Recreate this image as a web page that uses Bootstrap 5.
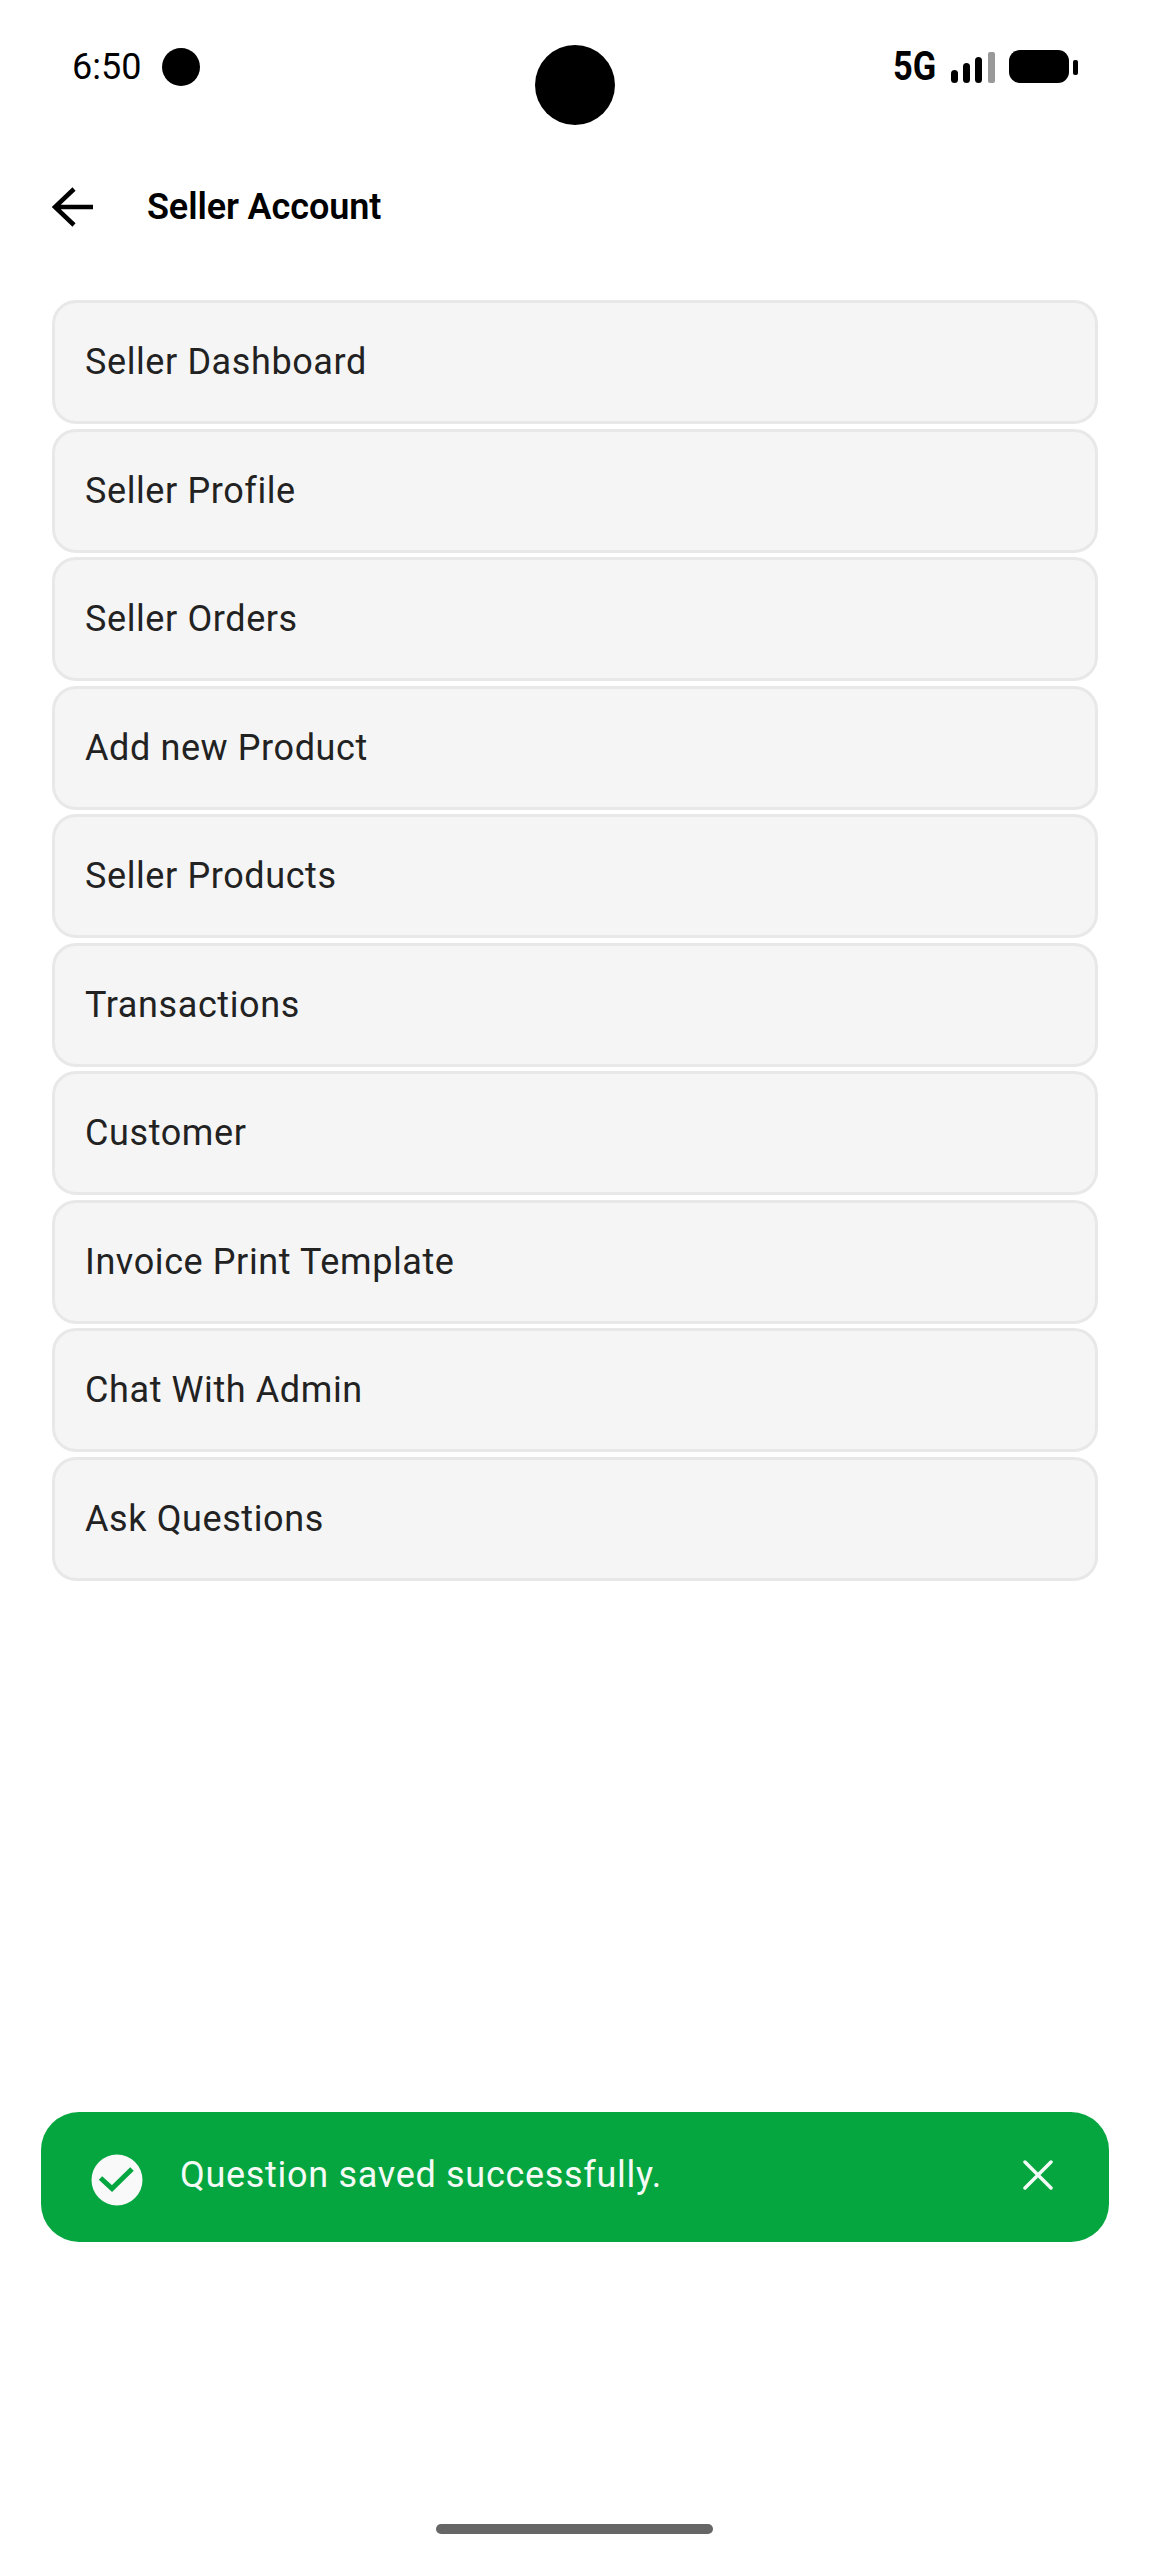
<!DOCTYPE html>
<html lang="en">

<head>
  <meta charset="utf-8">
  <meta name="viewport" content="width=device-width, initial-scale=1.0">
  <title>Seller Account</title>
  <link href="https://cdn.jsdelivr.net/npm/bootstrap@5.3.3/dist/css/bootstrap.min.css" rel="stylesheet">
  <style>
    body {
      background-color: #fff;
      font-family: Roboto, "Liberation Sans", sans-serif;
      color: #000;
    }

    .phone-screen {
      width: 1150px;
      height: 2560px;
      position: relative;
      overflow: hidden;
    }

    .status-row {
      height: 167px;
      padding: 48px 64px 0 72px;
    }

    .status-time {
      font-size: 36px;
      line-height: 38px;
    }

    .notif-dot {
      width: 38px;
      height: 38px;
      margin-left: 21px;
      border-radius: 50%;
      background-color: #000;
    }

    .camera-hole {
      position: absolute;
      left: 535px;
      top: 45px;
      width: 80px;
      height: 80px;
      border-radius: 50%;
      background-color: #000;
    }

    .net-label {
      font-size: 40px;
      line-height: 38px;
      font-weight: 700;
      width: 42px;
      display: inline-block;
      transform: scaleX(.86);
      transform-origin: left center;
      margin-right: 16px;
    }

    .title-row {
      height: 80px;
      padding-left: 52px;
    }

    .title-text {
      font-size: 36px;
      font-weight: 600;
      margin-left: 54px;
      letter-spacing: -.1px;
    }

    .menu-stack {
      margin: 53px 52px 0;
      gap: 4.5px;
    }

    .menu-entry {
      height: 124px;
      padding-left: 30px;
      background-color: #f5f5f5;
      border: 3px solid #e8e8e8;
      border-radius: 24px;
      font-size: 36px;
      letter-spacing: .6px;
      color: #222;
    }

    .saved-toast {
      position: absolute;
      left: 41px;
      top: 2112px;
      width: 1068px;
      height: 130px;
      margin: 0;
      padding: 0 56px 4px 50px;
      border: 0;
      border-radius: 38px;
      background-color: #05a640;
      color: #f4fbf6;
      font-size: 36px;
      letter-spacing: .7px;
    }

    .saved-toast svg.check-icon {
      margin-top: 10px;
      margin-right: 37px;
    }

    .toast-close {
      line-height: 0;
      border: 0;
    }

    .home-pill {
      position: absolute;
      left: 436px;
      top: 2524px;
      width: 277px;
      height: 10px;
      border-radius: 5px;
      background-color: #666;
    }
  </style>
</head>

<body>
  <div class="phone-screen">
    <div class="status-row d-flex justify-content-between align-items-start">
      <div class="d-flex align-items-center">
        <span class="status-time">6:50</span>
        <span class="notif-dot"></span>
      </div>
      <div class="d-flex align-items-center">
        <span class="net-label">5G</span>
        <svg width="135" height="38" viewBox="0 0 135 38">
          <rect x="0" y="22" width="7" height="13" rx="3.5" fill="#000" />
          <rect x="12" y="15" width="7" height="20" rx="3.5" fill="#000" />
          <rect x="24" y="9" width="7" height="26" rx="3.5" fill="#000" />
          <rect x="37" y="4" width="7" height="31" rx="2" fill="#999" />
          <rect x="58" y="2" width="60" height="33" rx="11" fill="#000" />
          <rect x="122" y="12" width="5" height="15" rx="2" fill="#000" />
        </svg>
      </div>
    </div>
    <div class="camera-hole"></div>

    <div class="title-row d-flex align-items-center">
      <svg width="41" height="40" viewBox="0 0 41 40">
        <path d="M41 20H3M22 2 3 20 22 38" fill="none" stroke="#000" stroke-width="4.500" />
      </svg>
      <span class="title-text">Seller Account</span>
    </div>

    <div class="menu-stack d-flex flex-column">
      <div class="menu-entry d-flex align-items-center">Seller Dashboard</div>
      <div class="menu-entry d-flex align-items-center">Seller Profile</div>
      <div class="menu-entry d-flex align-items-center">Seller Orders</div>
      <div class="menu-entry d-flex align-items-center">Add new Product</div>
      <div class="menu-entry d-flex align-items-center">Seller Products</div>
      <div class="menu-entry d-flex align-items-center">Transactions</div>
      <div class="menu-entry d-flex align-items-center">Customer</div>
      <div class="menu-entry d-flex align-items-center">Invoice Print Template</div>
      <div class="menu-entry d-flex align-items-center">Chat With Admin</div>
      <div class="menu-entry d-flex align-items-center">Ask Questions</div>
    </div>

    <div class="saved-toast alert d-flex align-items-center" role="alert">
      <svg class="check-icon" width="52" height="52" viewBox="0 0 52 52">
        <circle cx="26" cy="26" r="25.500" fill="#f8f9f8" />
        <path d="M9.500 24 21 34.500 41 15" fill="none" stroke="#05a640" stroke-width="5" />
      </svg>
      <span class="flex-grow-1">Question saved successfully.</span>
      <button class="toast-close btn p-0" type="button" aria-label="Close">
        <svg width="30" height="30" viewBox="0 0 30 30">
          <path d="M2 2 28 28M28 2 2 28" fill="none" stroke="#f4fbf6" stroke-width="3.500" stroke-linecap="round" />
        </svg>
      </button>
    </div>

    <div class="home-pill"></div>
  </div>

  <script src="https://cdn.jsdelivr.net/npm/bootstrap@5.3.3/dist/js/bootstrap.bundle.min.js"></script>
</body>

</html>
